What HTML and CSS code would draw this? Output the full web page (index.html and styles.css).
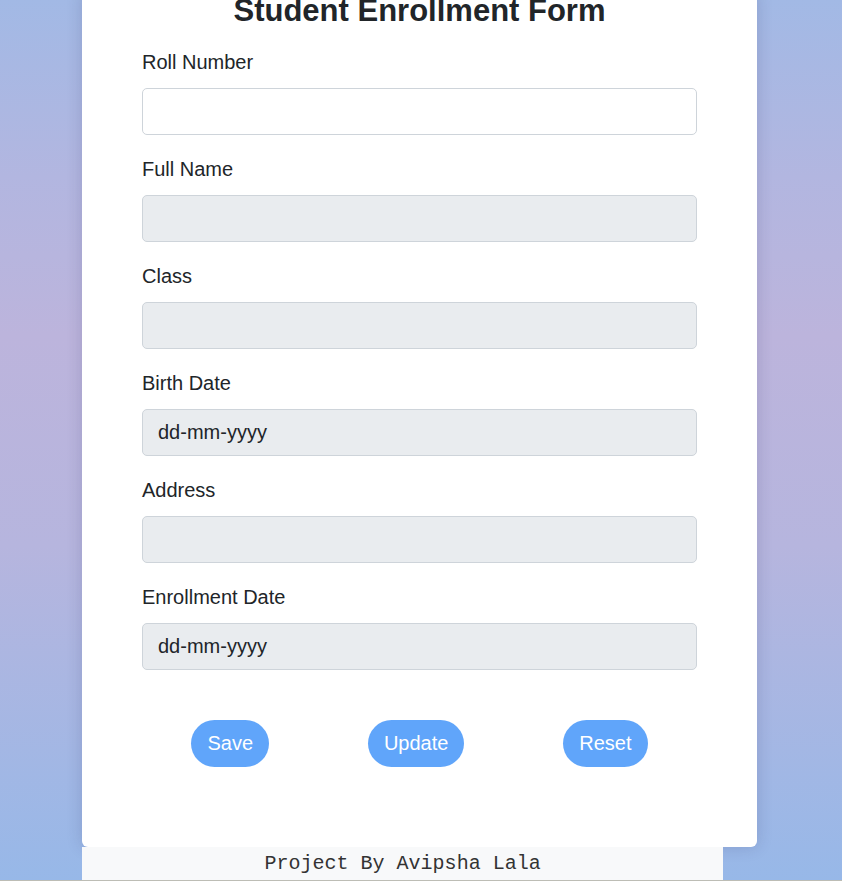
FILE: index.html
```html
<!DOCTYPE html>
<html lang="en">
<head>
<meta charset="utf-8">
<title>Student Enrollment Form</title>
<link rel="stylesheet" href="styles.css">
</head>
<body>
  <div class="page">
    <main class="card">
      <h2 class="title">Student Enrollment Form</h2>
      <form class="form">
        <div class="field">
          <label class="label" for="roll">Roll Number</label>
          <input class="control" id="roll" type="text">
        </div>
        <div class="field">
          <label class="label" for="name">Full Name</label>
          <input class="control" id="name" type="text" disabled>
        </div>
        <div class="field">
          <label class="label" for="cls">Class</label>
          <input class="control" id="cls" type="text" disabled>
        </div>
        <div class="field">
          <label class="label" for="birth">Birth Date</label>
          <input class="control" id="birth" type="text" value="dd-mm-yyyy" disabled>
        </div>
        <div class="field">
          <label class="label" for="addr">Address</label>
          <input class="control" id="addr" type="text" disabled>
        </div>
        <div class="field">
          <label class="label" for="enroll">Enrollment Date</label>
          <input class="control" id="enroll" type="text" value="dd-mm-yyyy" disabled>
        </div>
        <div class="actions">
          <button type="button" class="btn">Save</button>
          <button type="button" class="btn">Update</button>
          <button type="button" class="btn">Reset</button>
        </div>
      </form>
    </main>
    <footer class="footer">Project By Avipsha Lala</footer>
  </div>
  <div class="edge"></div>
</body>
</html>
```

FILE: styles.css
```css
html, body {
  margin: 0;
  padding: 0;
}

body {
  height: 881px;
  overflow: hidden;
  display: flex;
  flex-direction: column;
  font-family: "Liberation Sans", Arial, sans-serif;
  color: #212529;
  background: linear-gradient(180deg, #a2b9e5 0%, #b2b6e0 20%, #bcb4dc 38%, #b6b5de 62%, #97b8e8 100%);
}

.page {
  width: 675px;
  margin-left: 82px;
  flex: 1;
  display: flex;
  flex-direction: column;
}

.card {
  margin-top: -8px;
  background: #ffffff;
  border-radius: 0 0 6px 6px;
  box-shadow: 0 0 16px rgba(40, 40, 90, 0.18);
  padding: 0 60px 80px;
}

.title {
  margin: 0 0 18px;
  font-size: 31px;
  line-height: 37px;
  font-weight: 700;
  text-align: center;
  color: #212529;
}

.form {
  display: flex;
  flex-direction: column;
}

.field {
  display: flex;
  flex-direction: column;
  margin-bottom: 19px;
}

.label {
  font-size: 20px;
  line-height: 30px;
  margin-bottom: 11px;
  color: #212529;
}

.control {
  box-sizing: border-box;
  height: 47px;
  width: 100%;
  padding: 0 15px;
  font-family: "Liberation Sans", Arial, sans-serif;
  font-size: 20px;
  color: #212529;
  background: #ffffff;
  border: 1px solid #ced4da;
  border-radius: 5px;
  outline: none;
}

.control:disabled {
  background: #e9ecef;
  color: #212529;
  -webkit-text-fill-color: #212529;
  opacity: 1;
}

.actions {
  margin-top: 31px;
  display: flex;
  justify-content: space-around;
}

.btn {
  height: 47px;
  padding: 0 16px;
  border: none;
  border-radius: 24px;
  background: #60a5fa;
  color: #ffffff;
  font-family: "Liberation Sans", Arial, sans-serif;
  font-size: 20px;
  line-height: 47px;
}

.footer {
  width: 95%;
  height: 33px;
  box-sizing: border-box;
  background: #f8f9fa;
  font-family: "Liberation Mono", "Courier New", monospace;
  font-size: 20px;
  line-height: 33px;
  text-align: center;
  color: #333333;
}

.edge {
  height: 1px;
  background: #bdbdb5;
}
```
